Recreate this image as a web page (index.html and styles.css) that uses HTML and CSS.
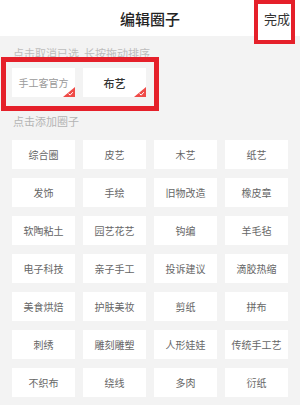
FILE: index.html
```html
<!DOCTYPE html>
<html lang="zh">
<head>
<meta charset="utf-8">
<link rel="stylesheet" href="styles.css">
</head>
<body>
<header class="topbar">
  <h1 class="title">编辑圈子</h1>
  <div class="done-mark"><span class="done">完成</span></div>
</header>
<main class="page">
  <p class="hint hint-top">点击取消已选&nbsp;&nbsp;长按拖动排序</p>
  <div class="selected">
    <div class="card sel light">手工客官方<svg class="tick" viewBox="0 0 12 10"><path d="M12 0V10H0Z" fill="#ef4a47"/><path d="M5.5 6.6L7.2 8.1L9.8 5.2" fill="none" stroke="#fff" stroke-width="1"/></svg></div>
    <div class="card sel dark">布艺<svg class="tick" viewBox="0 0 12 10"><path d="M12 0V10H0Z" fill="#ef4a47"/><path d="M5.5 6.6L7.2 8.1L9.8 5.2" fill="none" stroke="#fff" stroke-width="1"/></svg></div>
    <div class="mark-box"></div>
  </div>
  <p class="hint hint-add">点击添加圈子</p>
  <div class="grid">
    <div class="card">综合圈</div>
    <div class="card">皮艺</div>
    <div class="card">木艺</div>
    <div class="card">纸艺</div>
    <div class="card">发饰</div>
    <div class="card">手绘</div>
    <div class="card">旧物改造</div>
    <div class="card">橡皮章</div>
    <div class="card">软陶粘土</div>
    <div class="card">园艺花艺</div>
    <div class="card">钩编</div>
    <div class="card">羊毛毡</div>
    <div class="card">电子科技</div>
    <div class="card">亲子手工</div>
    <div class="card">投诉建议</div>
    <div class="card">滴胶热缩</div>
    <div class="card">美食烘焙</div>
    <div class="card">护肤美妆</div>
    <div class="card">剪纸</div>
    <div class="card">拼布</div>
    <div class="card">刺绣</div>
    <div class="card">雕刻雕塑</div>
    <div class="card">人形娃娃</div>
    <div class="card">传统手工艺</div>
    <div class="card">不织布</div>
    <div class="card">绕线</div>
    <div class="card">多肉</div>
    <div class="card">衍纸</div>
  </div>
</main>
</body>
</html>
```
FILE: styles.css
```css
html, body {
  margin: 0;
  padding: 0;
}
body {
  width: 300px;
  height: 405px;
  overflow: hidden;
  background: #f3f3f3;
  font-family: "Noto Sans CJK SC", "Noto Sans", sans-serif;
  color: #555;
}
.topbar {
  position: relative;
  height: 36px;
  background: #fff;
  display: flex;
  align-items: center;
  justify-content: center;
}
.title {
  margin: 0;
  font-size: 15px;
  font-weight: 500;
  color: #222;
  line-height: 20px;
  padding-top: 1px;
}
.done-mark {
  position: absolute;
  left: 254px;
  top: 0;
  width: 41px;
  height: 44px;
  box-sizing: border-box;
  border: 4px solid #e5202a;
  background: #fff;
  z-index: 2;
  padding: 7px 0 0 6px;
}
.done {
  display: block;
  font-size: 13px;
  line-height: 16px;
  color: #333;
  white-space: nowrap;
}
.page {
  padding: 0 12px;
}
.hint {
  margin: 0;
  font-size: 11px;
  line-height: 16px;
  color: #bdbdbd;
  padding-left: 1px;
}
.hint-top {
  padding-top: 9px;
}
.selected {
  position: relative;
  display: flex;
  gap: 8px;
  margin-top: 7px;
}
.hint-add {
  margin-top: 16px;
  color: #b3b3b3;
}
.grid {
  margin-top: 11px;
  display: grid;
  grid-template-columns: repeat(4, 63px);
  column-gap: 8px;
  row-gap: 9px;
}
.card {
  position: relative;
  height: 29px;
  width: 63px;
  background: #fff;
  display: flex;
  align-items: center;
  justify-content: center;
  font-size: 10px;
  color: #666;
  white-space: nowrap;
}
.sel.light {
  color: #9a9a9a;
}
.sel.dark {
  color: #333;
  font-size: 11px;
  font-weight: 500;
}
.tick {
  position: absolute;
  right: 0;
  bottom: 0;
  width: 12px;
  height: 10px;
}
.mark-box {
  position: absolute;
  left: -11px;
  top: -11px;
  width: 158px;
  height: 54px;
  box-sizing: border-box;
  border: 5px solid #e5202a;
  pointer-events: none;
}
```
